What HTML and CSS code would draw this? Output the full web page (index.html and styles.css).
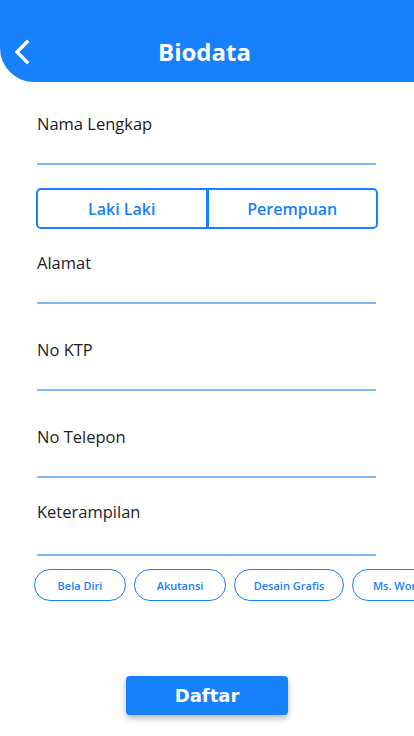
FILE: index.html
```html
<!DOCTYPE html>
<html>
<head>
<meta charset="utf-8">
<link rel="stylesheet" href="styles.css">
</head>
<body>
<div class="app">
  <header class="header">
    <svg class="back" width="20" height="26" viewBox="0 0 20 26"><path d="M14 3 L4 13 L14 23" fill="none" stroke="#fff" stroke-width="3.4" stroke-linecap="square"/></svg>
    <h1 class="title">Biodata</h1>
  </header>
  <main class="form">
    <div class="field field-first">
      <div class="label">Nama Lengkap</div>
      <div class="input"></div>
    </div>
    <div class="toggle">
      <div class="opt">Laki Laki</div>
      <div class="divider"></div>
      <div class="opt">Perempuan</div>
    </div>
    <div class="field field-a">
      <div class="label">Alamat</div>
      <div class="input"></div>
    </div>
    <div class="field field-b">
      <div class="label">No KTP</div>
      <div class="input"></div>
    </div>
    <div class="field field-b">
      <div class="label">No Telepon</div>
      <div class="input"></div>
    </div>
    <div class="field field-a">
      <div class="label">Keterampilan</div>
      <div class="input input-tall"></div>
    </div>
  </main>
  <div class="chips">
    <div class="chip chip-sm">Bela Diri</div>
    <div class="chip chip-sm">Akutansi</div>
    <div class="chip chip-lg">Desain Grafis</div>
    <div class="chip chip-sm">Ms. Word</div>
  </div>
  <div class="actions">
    <button class="submit">Daftar</button>
  </div>
</div>
</body>
</html>
```
FILE: styles.css
```css
* { box-sizing: border-box; }
html, body { margin: 0; padding: 0; background: #fff; }
body { font-family: "Open Sans", "Noto Sans", sans-serif; width: 414px; height: 736px; overflow: hidden; }
.header {
  height: 82px;
  background: #1780fc;
  border-bottom-left-radius: 34px;
  display: flex;
  align-items: center;
  position: relative;
  padding-top: 22px;
}
.back { position: absolute; left: 13px; top: 39px; }
.title {
  margin: 0;
  flex: 1;
  text-align: center;
  color: #fff;
  font-size: 24px;
  font-weight: 700;
  line-height: 30px;
  padding-right: 5px;
}
.form { padding: 0 38px 0 37px; }
.label { font-size: 16.5px; line-height: 24px; color: #1d1d1d; }
.input { height: 29px; border-bottom: 2px solid #7fb8fa; }
.input-tall { height: 32px; }
.field-first { margin-top: 30px; }
.field-a { margin-top: 22px; }
.field-b { margin-top: 34px; }
.toggle {
  margin: 23px -2px 0 -1px;
  height: 41px;
  border: 2px solid #1780fc;
  border-radius: 5px;
  display: flex;
  align-items: stretch;
}
.opt {
  flex: 1;
  display: flex;
  align-items: center;
  justify-content: center;
  color: #1780fc;
  font-size: 16px;
  font-weight: 600;
}
.divider { width: 3px; background: #1780fc; }
.chips {
  margin-top: 13px;
  padding-left: 34px;
  display: flex;
  gap: 8px;
  overflow: hidden;
  white-space: nowrap;
}
.chip {
  flex: none;
  height: 32px;
  border: 1px solid #1780fc;
  border-radius: 16px;
  display: flex;
  align-items: center;
  justify-content: center;
  color: #1780fc;
  font-size: 11px;
  font-weight: 600;
}
.chip-sm { width: 92px; }
.chip-lg { width: 110px; }
.actions { display: flex; justify-content: center; margin-top: 75px; }
.submit {
  width: 162px;
  height: 39px;
  border: none;
  border-radius: 4px;
  background: #1780fc;
  color: #fff;
  font-family: "DejaVu Sans", sans-serif;
  font-weight: 700;
  font-size: 18px;
  box-shadow: 0 3px 6px rgba(0,0,0,0.3);
  padding: 0;
}
```
